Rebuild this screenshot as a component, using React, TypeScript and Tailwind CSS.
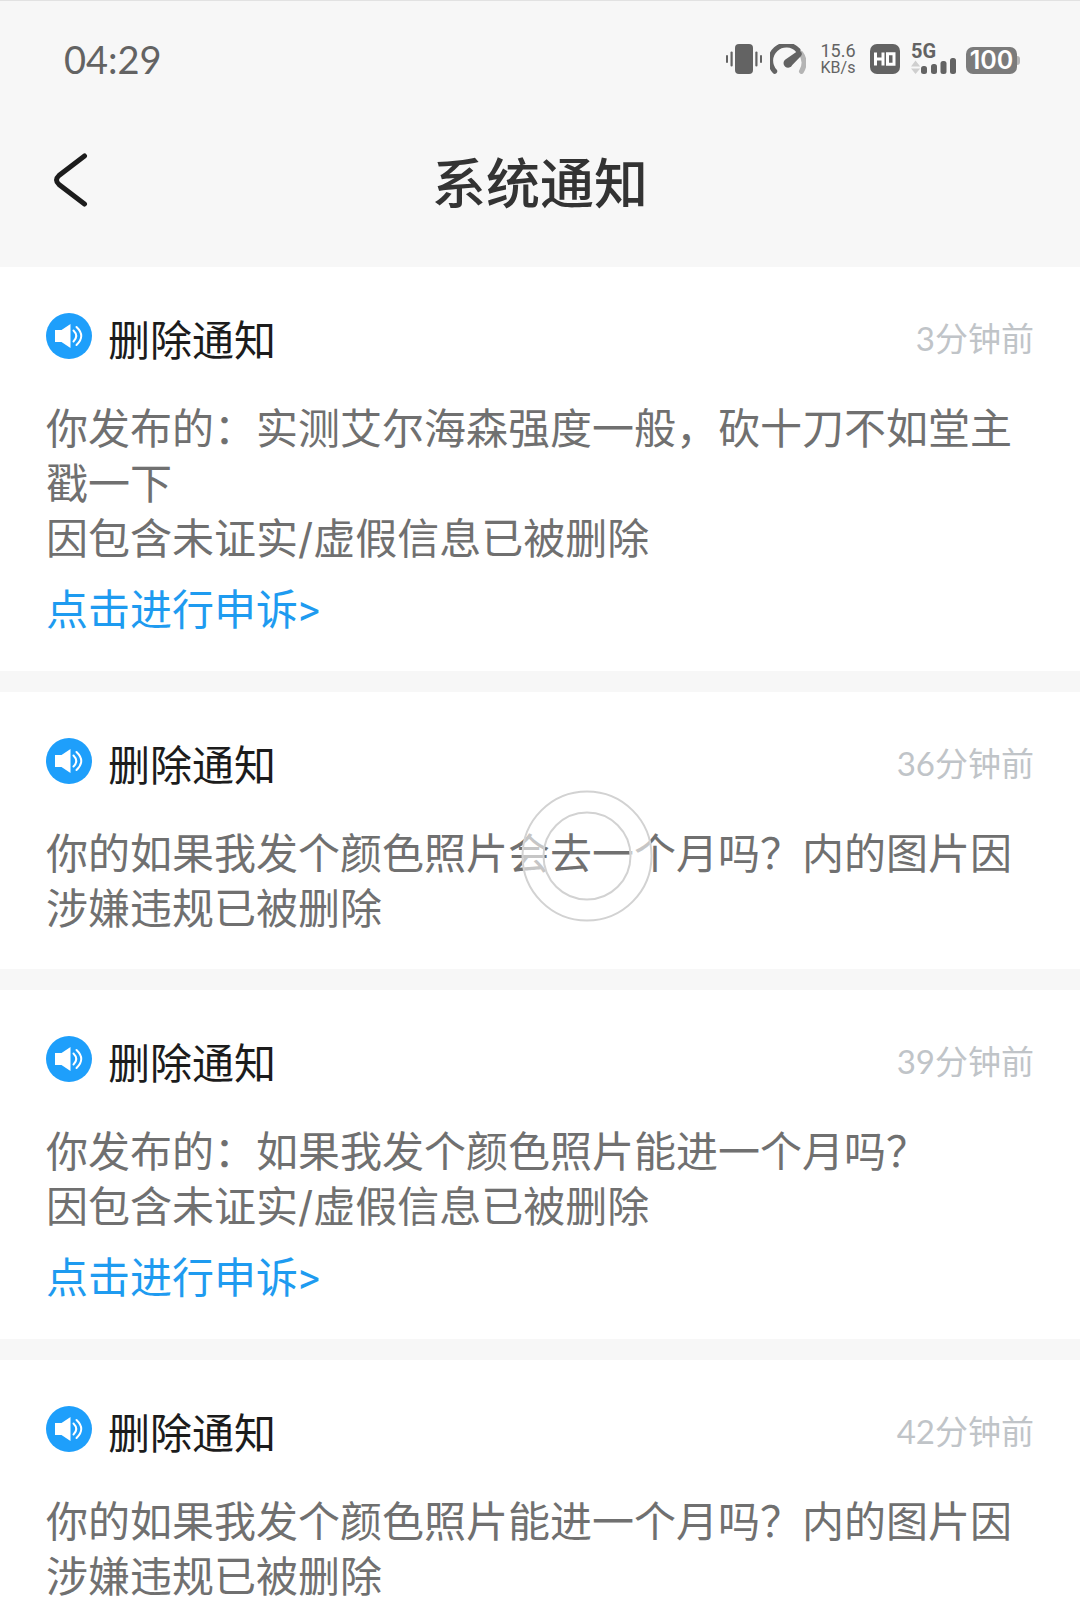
import React from 'react';

interface Notice {
    id: number;
    time: string;
    lines: string[];
    appeal?: boolean;
}

const notices: Notice[] = [
    {
        id: 1,
        time: '3分钟前',
        lines: ['你发布的：实测艾尔海森强度一般，砍十刀不如堂主戳一下', '因包含未证实/虚假信息已被删除'],
        appeal: true,
    },
    {
        id: 2,
        time: '36分钟前',
        lines: ['你的如果我发个颜色照片会去一个月吗？内的图片因涉嫌违规已被删除'],
    },
    {
        id: 3,
        time: '39分钟前',
        lines: ['你发布的：如果我发个颜色照片能进一个月吗？', '因包含未证实/虚假信息已被删除'],
        appeal: true,
    },
    {
        id: 4,
        time: '42分钟前',
        lines: ['你的如果我发个颜色照片能进一个月吗？内的图片因涉嫌违规已被删除'],
    },
];

const VibrateIcon = () => (
    <svg className="w-9 h-[30px]" viewBox="0 0 36 30" fill="#636363">
        <rect x="9" y="0" width="18" height="30" rx="4" />
        <rect x="0" y="11" width="2" height="8" rx="1" />
        <rect x="4.500" y="7.500" width="2.200" height="15" rx="1.100" />
        <rect x="29.300" y="7.500" width="2.200" height="15" rx="1.100" />
        <rect x="34" y="11" width="2" height="8" rx="1" />
    </svg>
);

const GaugeIcon = () => (
    <svg className="w-9 h-[30px]" viewBox="0 0 36 30" fill="none" strokeLinecap="round" strokeWidth="5">
        <path d="M31 9.500A15.500 15.500 0 0 1 31.500 27.300" stroke="#b4b4b4" />
        <path d="M4.700 27.300A15.500 15.500 0 0 1 28 6.200" stroke="#636363" />
        <path d="M30.500 7.500Q33 9.500 31 12L22.300 21A4.600 4.600 0 1 1 15.400 15.400L27 7.500Q29 6.500 30.500 7.500Z" fill="#636363" />
    </svg>
);

const HdIcon = () => (
    <svg className="w-[30px] h-[30px]" viewBox="0 0 30 30">
        <rect width="30" height="30" rx="7" fill="#636363" />
        <path d="M5.500 8.500v13M13 8.500v13M5.500 15h7.500M17.500 9.800h6.500v10.400h-6.500z" fill="none" stroke="#fff" strokeWidth="3" />
    </svg>
);

const SignalIcon = () => (
    <div className="w-[45px] flex flex-col">
        <span className="font-['Roboto'] font-bold text-[20px] leading-[14px]">5G</span>
        <svg className="w-[45px] h-4" viewBox="0 0 45 16" fill="#636363">
            <path d="M4.500 2.500L9.200 8.500H0zM4.500 16L9.200 10.500H0z" fill="#cfcfcf" />
            <rect x="10" y="8" width="6" height="8" rx="2.500" />
            <rect x="20" y="6" width="6" height="10" rx="2.500" />
            <rect x="29.500" y="3" width="6" height="13" rx="2.500" />
            <rect x="39" y="0" width="6" height="16" rx="2.500" />
        </svg>
    </div>
);

const Battery = () => (
    <div className="flex items-center">
        <div className="w-[51px] h-[27px] rounded-[7px] bg-[#7b7b7b] text-white flex items-center justify-center font-['Inter'] font-semibold text-[25px] leading-none">
            100
        </div>
        <div className="w-[3px] h-[9px] rounded-r bg-[#b4b4b4]" />
    </div>
);

const StatusBar = () => (
    <div className="h-[120px] pb-1 pl-16 pr-[60px] border-t border-[#e2e2e2] flex items-center justify-between text-[#636363]">
        <span className="font-['Lato'] text-[38px] leading-none">04:29</span>
        <div className="flex items-center">
            <VibrateIcon />
            <div className="ml-2"><GaugeIcon /></div>
            <div className="w-10 ml-3 text-center font-['Roboto'] text-[18px] leading-[17px]">
                <div>15.6</div>
                <div className="text-[16px]">KB/s</div>
            </div>
            <div className="ml-3"><HdIcon /></div>
            <div className="ml-[11px]"><SignalIcon /></div>
            <div className="ml-[10px] mt-[3px]"><Battery /></div>
        </div>
    </div>
);

const TitleBar = () => (
    <header className="h-[147px] px-[52px] pb-7 grid grid-cols-[1fr_auto_1fr] items-center">
        <button type="button" aria-label="返回" className="justify-self-start">
            <svg className="w-9 h-14" viewBox="0 0 36 56" fill="none" stroke="#1c1c1c" strokeWidth="5" strokeLinecap="round">
                <path d="M32.500 4L7 23.500Q2 28 7 32.500L32.500 52" />
            </svg>
        </button>
        <h1 className="pt-[10px] text-[54px] leading-[64px] font-medium text-[#333]">系统通知</h1>
    </header>
);

const SpeakerIcon = () => (
    <svg className="w-[46px] h-[46px] mb-[6px]" viewBox="0 0 46 46" fill="none">
        <circle cx="23" cy="23" r="23" fill="#1e9ffb" />
        <path d="M9 17h6.500L24.500 11v24L15.500 29H9z" fill="#fff" />
        <path d="M27.500 17.500q5.500 5.500 0 11M30.500 14q9.500 9 0 18" stroke="#fff" strokeWidth="2" strokeLinecap="round" />
    </svg>
);

const NoticeCard: React.FC<{ notice: Notice }> = ({ notice }) => (
    <article className="bg-white px-[46px] pt-11 pb-[33px]">
        <div className="h-14 flex items-center">
            <SpeakerIcon />
            <h2 className="ml-4 pt-[3px] text-[42px] leading-[56px] text-[#1c1c1c]">删除通知</h2>
            <time className="ml-auto pb-[2px] font-['Lato','Noto_Sans_CJK_SC',sans-serif] text-[33px] leading-[56px] text-[#c0c4c8]">
                {notice.time}
            </time>
        </div>
        <div className="mt-[34px] text-[42px] leading-[55px] text-[#707070]">
            {notice.lines.map((line) => (
                <p key={line}>{line}</p>
            ))}
        </div>
        {notice.appeal && (
            <a href="#appeal" className="block mt-[17px] font-['Roboto','Noto_Sans_CJK_SC',sans-serif] text-[42px] leading-[55px] text-[#1e9bf0]">
                点击进行申诉&gt;
            </a>
        )}
    </article>
);

const TouchRing = () => (
    <svg className="absolute left-[521px] top-[790px] w-[132px] h-[132px] pointer-events-none" viewBox="0 0 132 132" fill="none">
        <circle cx="66" cy="66" r="54" stroke="#fff" strokeOpacity="0.6" strokeWidth="21" />
        <circle cx="66" cy="66" r="64.500" stroke="#d2d2d2" strokeWidth="2" />
        <circle cx="66" cy="66" r="43.500" stroke="#d2d2d2" strokeWidth="2" />
    </svg>
);

export default function App() {
    return (
        <div className="relative h-screen overflow-hidden flex flex-col bg-[#f7f7f7] font-['Inter','Noto_Sans_CJK_SC',sans-serif]">
            <StatusBar />
            <TitleBar />
            <main className="flex-1 min-h-0 overflow-y-auto [scrollbar-width:none] flex flex-col gap-[21px]">
                {notices.map((notice) => (
                    <NoticeCard key={notice.id} notice={notice} />
                ))}
            </main>
            <TouchRing />
        </div>
    );
}
